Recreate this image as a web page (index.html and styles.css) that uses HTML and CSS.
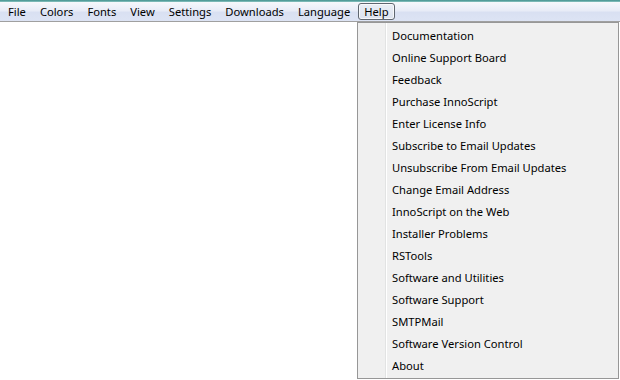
FILE: index.html
```html
<!DOCTYPE html>
<html lang="en">
<head>
    <meta charset="UTF-8">
    <title>InnoScript</title>
    <link rel="stylesheet" href="styles.css">
</head>
<body>
    <div class="title-strip"></div>
    <div class="menubar">
        <span class="menu-item">File</span>
        <span class="menu-item">Colors</span>
        <span class="menu-item">Fonts</span>
        <span class="menu-item">View</span>
        <span class="menu-item">Settings</span>
        <span class="menu-item">Downloads</span>
        <span class="menu-item">Language</span>
        <span class="menu-item open">Help</span>
    </div>
    <div class="workspace">
        <!-- Help dropdown -->
        <div class="dropdown">
            <div class="gutter"></div>
            <ul class="dropdown-list">
                <li>Documentation</li>
                <li>Online Support Board</li>
                <li>Feedback</li>
                <li>Purchase InnoScript</li>
                <li>Enter License Info</li>
                <li>Subscribe to Email Updates</li>
                <li>Unsubscribe From Email Updates</li>
                <li>Change Email Address</li>
                <li>InnoScript on the Web</li>
                <li>Installer Problems</li>
                <li>RSTools</li>
                <li>Software and Utilities</li>
                <li>Software Support</li>
                <li>SMTPMail</li>
                <li>Software Version Control</li>
                <li>About</li>
            </ul>
        </div>
    </div>
</body>
</html>
```
FILE: styles.css
```css
body {
    margin: 0;
    width: 620px;
    height: 380px;
    overflow: hidden;
    background: white;
    font-family: "Noto Sans", "Open Sans", sans-serif;
    font-size: 11.2px;
    color: #000;
}

.title-strip {
    height: 2px;
    background: linear-gradient(to bottom, #3f8f8c, #8cc4c2);
}

.menubar {
    display: flex;
    align-items: center;
    height: 19px;
    padding-left: 2px;
    background: linear-gradient(to bottom, #f6f8fc 0%, #e8ecf7 45%, #d9e0f2 55%, #dde4f4 100%);
    border-bottom: 1px solid #a0a0a0;
}

.menu-item {
    padding: 0 5px;
    margin-right: 2px;
    line-height: 15px;
    border: 1px solid transparent;
    border-radius: 3px;
}

.menu-item.open {
    background: linear-gradient(to bottom, #eaeef6, #dce2ee);
    border-color: #5f6670;
    box-shadow: inset 0 0 0 1px rgba(255,255,255,0.7);
}

.workspace {
    position: relative;
    height: 358px;
}

.dropdown {
    position: absolute;
    left: 357px;
    top: 0;
    width: 260px;
    height: 355px;
    display: flex;
    background: #f0f0f0;
    border: 1px solid #979797;
}

.gutter {
    width: 27px;
    flex: none;
    border-right: 1px solid #e2e3e3;
    box-shadow: 1px 0 0 #ffffff;
}

.dropdown-list {
    list-style: none;
    margin: 0;
    padding: 2px 0 0 6px;
}

.dropdown-list li {
    height: 22px;
    line-height: 22px;
    white-space: nowrap;
}
```
